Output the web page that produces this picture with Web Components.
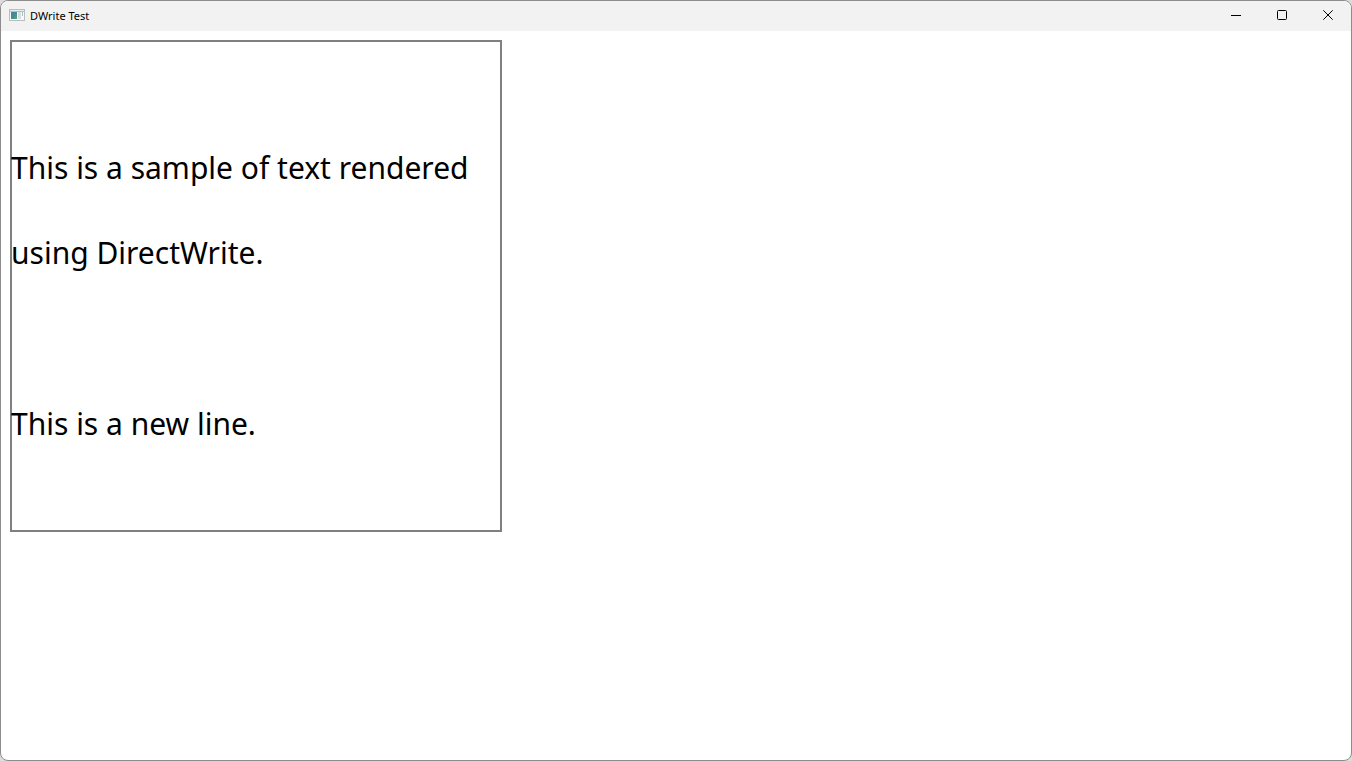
<!DOCTYPE html>
<html lang="en">
<head>
<meta charset="utf-8">
<title>DWrite Test</title>
<style>
html, body { height: 100%; }
body { margin: 0; background: #dcdcdc; color: #000; font-family: "Noto Sans", "Open Sans", sans-serif; }
</style>
</head>
<body>
<app-window>
  <title-bar slot="bar">DWrite Test</title-bar>
  <text-layout>
    <p>This is a sample of text rendered using DirectWrite.</p>
    <p>This is a new line.</p>
  </text-layout>
</app-window>
<script>
function define(name, html) {
  customElements.define(name, class extends HTMLElement {
    constructor() {
      super();
      this.attachShadow({ mode: "open" }).innerHTML = html;
    }
  });
}

define("app-window", `
<style>
  :host { display: flex; flex-direction: column; box-sizing: border-box; min-height: 100%;
    background: #fff; border: 1px solid #8c8c8c; border-radius: 8px; overflow: hidden; }
  main { flex: 1; padding: 10px; }
</style>
<slot name="bar"></slot>
<main><slot></slot></main>`);

define("title-bar", `
<style>
  :host { display: block; background: #f2f2f2; }
  header { display: flex; align-items: center; height: 30px; padding-left: 8px; }
  h1 { flex: 1; margin: 0 0 0 5px; font-size: 11px; line-height: 16px; font-weight: 400; }
</style>
<header>
  <svg width="16" height="16" viewBox="0 0 16 16" aria-hidden="true">
    <defs><linearGradient id="g" x1="0" y1="0" x2="1" y2="1">
      <stop offset="0" stop-color="#4a7fae"/><stop offset=".5" stop-color="#458b92"/><stop offset="1" stop-color="#58a878"/>
    </linearGradient></defs>
    <path fill="#b9bcc0" d="M0 1h16v12H0z"/>
    <path fill="#e9ebee" d="M1 2h14v1H1z"/>
    <path fill="#f8f9fa" d="M1 4h14v8H1z"/>
    <path fill="url(#g)" d="M2 4h6v7H2z"/>
    <path fill="#d9dde3" d="M9 4h3v7H9z"/>
    <path fill="#9fc8b4" d="M13 4h1v4h-1z"/>
  </svg>
  <h1><slot></slot></h1>
  <caption-button kind="minimize"></caption-button>
  <caption-button kind="maximize"></caption-button>
  <caption-button kind="close"></caption-button>
</header>`);

const glyphs = {
  minimize: '<path d="M0 5.5h10"/>',
  maximize: '<rect x=".5" y=".5" width="9" height="9" rx="1"/>',
  close: '<path d="M.3.3l9.4 9.4M9.7.3L.3 9.7"/>'
};
customElements.define("caption-button", class extends HTMLElement {
  constructor() {
    super();
    this.attachShadow({ mode: "open" });
  }
  connectedCallback() {
    const kind = this.getAttribute("kind");
    this.shadowRoot.innerHTML = `
<style>
  :host { display: block; height: 100%; }
  button { display: flex; align-items: center; justify-content: center; width: 46px; height: 28px; padding: 0;
    border: 0; background: none; color: inherit; }
  button:hover { background: #e0e0e0; }
  svg { fill: none; stroke: currentColor; overflow: visible; }
</style>
<button type="button" aria-label="${kind}"><svg width="10" height="10" viewBox="0 0 10 10" aria-hidden="true">${glyphs[kind]}</svg></button>`;
  }
});

define("text-layout", `
<style>
  /* The two rings form a stroke centred on the edge of the layout box. */
  :host { display: flex; flex-direction: column; justify-content: center; gap: 86px; box-sizing: border-box;
    width: 490px; max-width: 100%; min-height: 490px; padding-top: 18px;
    box-shadow: 0 0 0 1px #808080, inset 0 0 0 1px #808080; font-size: 30px; line-height: 85px; }
  ::slotted(p) { margin: 0 !important; }
</style>
<slot></slot>`);
</script>
</body>
</html>
